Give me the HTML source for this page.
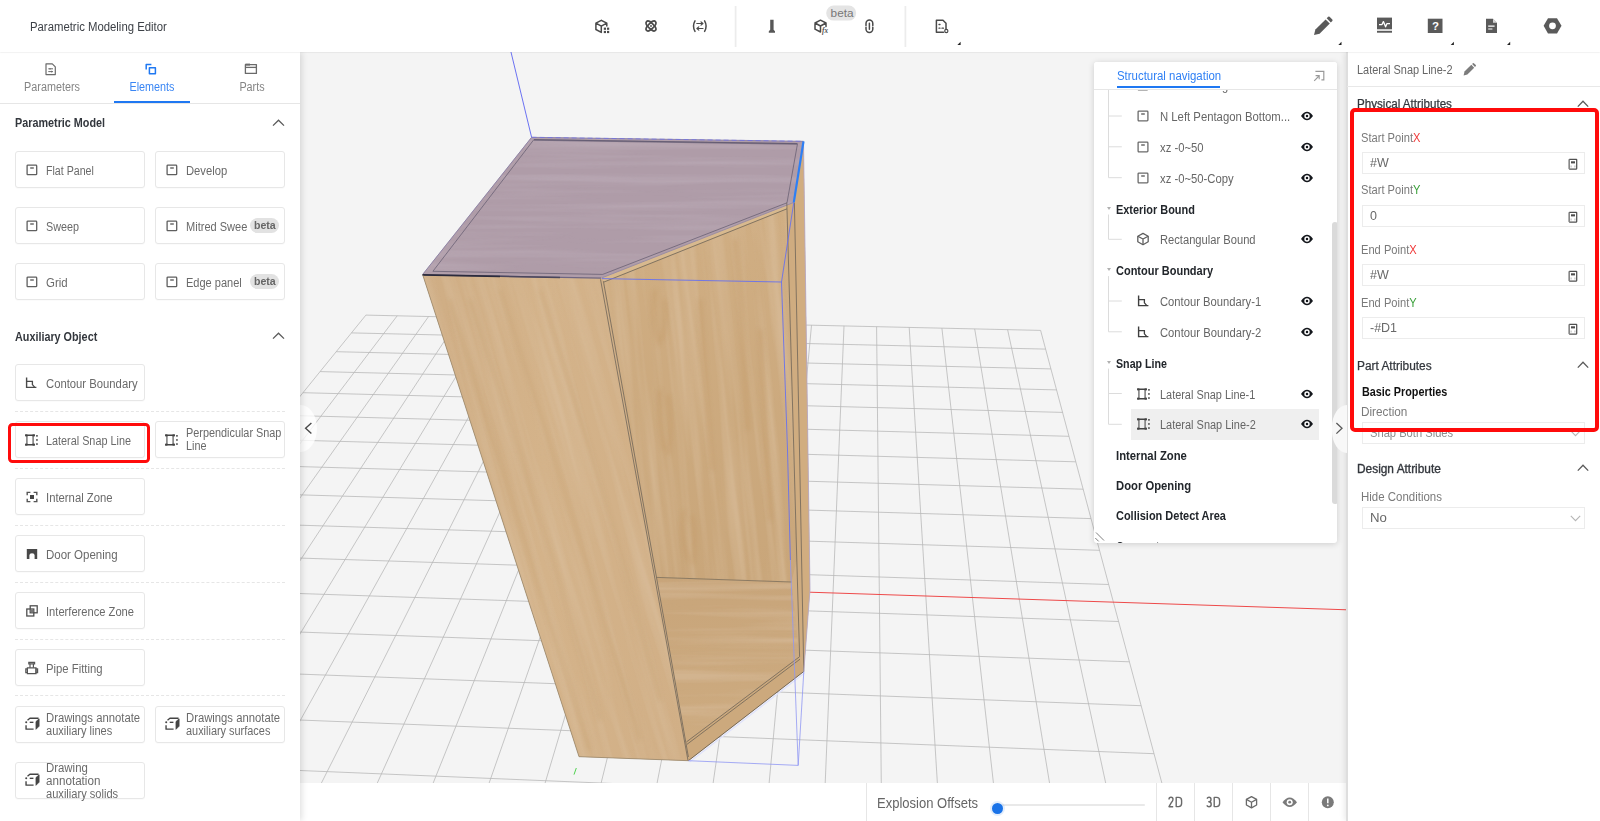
<!DOCTYPE html>
<html><head><meta charset="utf-8">
<style>
*{box-sizing:border-box;margin:0;padding:0}
html,body{width:1600px;height:821px;overflow:hidden;background:#fff;font-family:"Liberation Sans",sans-serif;font-size:12px;color:#60656f}
.abs{position:absolute}
#top{position:absolute;left:0;top:0;width:1600px;height:52px;background:#fff;box-shadow:0 0.5px 1.5px rgba(0,0,0,.13);z-index:30}
#top .title{position:absolute;left:29.6px;top:20px;font-size:12px;color:#3d4147;transform:scaleX(.945);transform-origin:0 50%;white-space:nowrap}
#left{position:absolute;left:0;top:52px;width:300px;height:769px;background:#fff;z-index:20;box-shadow:2px 0 6px rgba(0,0,0,.12)}
#vp{position:absolute;left:300px;top:52px;width:1047px;height:731px;background:#f4f4f4;overflow:hidden;z-index:1}
#bbar{position:absolute;left:300px;top:783px;width:1047px;height:38px;background:#fff;z-index:5}
#right{position:absolute;left:1347px;top:52px;width:253px;height:769px;background:#fff;z-index:20;box-shadow:-2px 0 6px rgba(0,0,0,.10)}
#nav{position:absolute;left:1094px;top:62px;width:243px;height:481px;background:#fff;z-index:10;box-shadow:0 1px 6px rgba(0,0,0,.16);overflow:hidden;border-radius:3px}
.ic{position:absolute}
</style></head><body>
<div id="top">
<div class="title">Parametric Modeling Editor</div>
<svg class="abs" style="left:0;top:0" width="1600" height="52" viewBox="0 0 1600 52">
<g fill="none" stroke="#4a4a4a" stroke-width="1.5" stroke-linejoin="round" stroke-linecap="round">
<!-- cube with dots -->
<path d="M601.3 20.3L606.8 23.2V26M601.3 20.3L595.9 23.2V29.5L601.3 32.4V26.2L595.9 23.2M601.3 26.2L606.8 23.2"/>
<!-- atom -->
<ellipse cx="651" cy="26" rx="6.3" ry="2.7" transform="rotate(45 651 26)" stroke-width="1.7"/>
<ellipse cx="651" cy="26" rx="6.3" ry="2.7" transform="rotate(-45 651 26)" stroke-width="1.7"/>
<!-- (swap) -->
<path d="M695 20.8Q692 26 695 31.4M704.6 20.8Q707.6 26 704.6 31.4"/>
<path d="M696.8 23.5H702.8M701 21.9L702.9 23.5L701 25.1M703 28.5H697M698.8 26.9L696.9 28.5L698.8 30.1" stroke-width="1.2"/>
<!-- cube fx -->
<path d="M820.5 20.2L826 23V26.4M820.5 20.2L815 23V29.2L820.5 32V26L815 23M820.5 26L826 23"/>
<!-- link -->
<path d="M866 25.4V23.5A3.4 3.4 0 0 1 872.8 23.5V25.4M866 27.2V29A3.4 3.4 0 0 0 872.8 29V27.2M869.4 23.2V29.3"/>
<!-- doc gear -->
<path d="M946 29V23.2L943 20.2H936.4V32.3H943.5"/>
<path d="M939 24.5H940M939 28.2H940M942 28.2H943.5" stroke-width="1.3"/>
<circle cx="946.3" cy="31" r="1.6" stroke-width="1.2"/>
</g>
<g fill="#4a4a4a">
<rect x="603.8" y="27.6" width="2.2" height="2.2"/><rect x="607" y="27.6" width="2.2" height="2.2"/>
<rect x="603.8" y="30.9" width="2.2" height="2.2"/><rect x="607" y="30.9" width="2.2" height="2.2"/>
<circle cx="651" cy="26" r="0.9"/>
<!-- pillar -->
<path d="M770.2 19.8H773.6V29.8L775 31.2V32.8H768.8V31.2L770.2 29.8Z" fill="#575757"/>
<text x="822" y="32.6" font-family="Liberation Serif,serif" font-style="italic" font-weight="bold" font-size="7.2" fill="#505050">fx</text>
</g>
<!-- separators -->
<path d="M735.6 6V47M905.4 6V47" stroke="#ececec" stroke-width="1.7"/>
<!-- beta badge -->
<rect x="826.2" y="5.6" width="30" height="15" rx="7.5" fill="#e4e4e4"/>
<text x="830.6" y="17.3" font-family="Liberation Sans,sans-serif" font-size="11.8" fill="#777">beta</text>
<!-- triangles -->
<g fill="#222">
<path d="M960.6 41.8V45H957.4Z"/><path d="M1341.5 41.8V45H1338.3Z"/><path d="M1453.9 41.8V45H1450.7Z"/><path d="M1510.2 41.8V45H1507Z"/>
</g>
<!-- right icons -->
<g fill="#5a5a5a">
<!-- pencil -->
<path d="M1314 35L1315.4 29.6L1325.6 19.4L1329.8 23.6L1319.6 33.8Z"/>
<path d="M1326.7 18.3L1328.2 16.8Q1328.9 16.2 1329.6 16.8L1332.3 19.5Q1332.9 20.2 1332.3 20.9L1330.8 22.4Z"/>
<!-- monitor -->
<path d="M1377 17.6H1392V29.3H1377Z"/>
<rect x="1377" y="30.8" width="15" height="1.9"/>
<!-- question -->
<rect x="1427.8" y="18.7" width="14.7" height="14.3"/>
<!-- doc -->
<path d="M1486 18.7H1493L1497 22.7V33H1486Z"/>
<!-- hex -->
<path d="M1543.6 25.8L1548 18.2H1557L1561.5 25.8L1557 33.5H1548Z"/>
</g>
<path d="M1379 24.6H1382L1383.4 21.6L1385.6 26.8L1387 23.6H1390" fill="none" stroke="#fff" stroke-width="1.3" stroke-linejoin="round"/>
<text x="1431.9" y="30.2" font-family="Liberation Sans,sans-serif" font-weight="bold" font-size="11.5" fill="#fff">?</text>
<path d="M1493 18.7V22.7H1497Z" fill="#fff" opacity="0.75"/>
<path d="M1488.2 26.2H1494.6M1488.2 29H1492.4" stroke="#fff" stroke-width="1.2"/>
<circle cx="1552.5" cy="25.8" r="3.4" fill="#fff"/>
</svg>
</div>
<style>
.t{display:inline-block;transform:scaleX(.9);transform-origin:0 50%;white-space:nowrap}
.btn{position:absolute;width:130px;height:37px;border:1px solid #e7e7e7;border-radius:3px;background:#fff;box-shadow:0 1px 1px rgba(0,0,0,.02)}
.btn .lb{position:absolute;left:29.9px;top:1.7px;height:35px;line-height:35px;color:#6a6a6a;font-size:12px}
.btn .lb2{position:absolute;left:29.9px;color:#6a6a6a;font-size:12px;line-height:13.2px}
.btn svg{position:absolute;left:8px;top:10px}
.sec{position:absolute;left:15px;font-weight:bold;color:#33373d;font-size:12px}
.dash{position:absolute;left:15px;width:270px;height:0;border-top:1px dashed #e6e6e6}
.beta{position:absolute;height:14.5px;width:29px;border-radius:7.5px;background:#e2e2e2;color:#666;font-weight:bold;font-size:11.5px;line-height:14px;padding-left:3.5px}
.tab{position:absolute;top:0;width:100px;height:51px;text-align:center;color:#858585;font-size:12px}
.tab .tl{position:absolute;left:1.6px;width:100px;top:28px;text-align:center}
.tab .tl .t{transform-origin:50% 50%}
</style>
<div id="left">
<div class="tab" style="left:0"><svg class="abs" style="left:44px;top:10px" width="14" height="14" viewBox="0 0 14 14" fill="none" stroke="#6a6a6a" stroke-width="1.2" stroke-linejoin="round"><path d="M2 1.8H8.3L11.3 4.8V12.6H2Z"/><path d="M4.3 6.8H9M4.3 9.6H9" stroke-width="1"/><path d="M6 6V7.6M7.6 8.8V10.4" stroke-width="1"/></svg><div class="tl"><span class="t">Parameters</span></div></div>
<div class="tab" style="left:100px;color:#3a86f4"><svg class="abs" style="left:44px;top:10px" width="14" height="14" viewBox="0 0 14 14" fill="none" stroke="#1f78f2" stroke-width="1.5" stroke-linejoin="round"><path d="M2.2 7.5V2.6H7.4"/><rect x="5.4" y="5.8" width="6" height="6"/></svg><div class="tl"><span class="t">Elements</span></div></div>
<div class="tab" style="left:200px"><svg class="abs" style="left:44px;top:10px" width="14" height="14" viewBox="0 0 14 14" fill="none" stroke="#6a6a6a" stroke-width="1.3" stroke-linejoin="round"><path d="M1.4 2.6H12.4V11.4H1.4Z"/><path d="M1.4 5.4H12.4"/><path d="M1.4 2.6H6" stroke-width="2"/></svg><div class="tl"><span class="t">Parts</span></div></div>
<div class="abs" style="left:0;top:51px;width:300px;height:1px;background:#e6e6e6"></div>
<div class="abs" style="left:114px;top:49px;width:76px;height:2px;background:#1f78f2"></div>
<div class="sec" style="top:64px"><span class="t" style="transform:scaleX(.9)">Parametric Model</span></div><svg class="abs" style="left:272px;top:67px" width="13" height="8" viewBox="0 0 13 8" fill="none" stroke="#5a5a5a" stroke-width="1.3"><path d="M1 6.6L6.5 1.2L12 6.6"/></svg>
<div class="sec" style="top:278px"><span class="t" style="transform:scaleX(.9)">Auxiliary Object</span></div><svg class="abs" style="left:272px;top:280px" width="13" height="8" viewBox="0 0 13 8" fill="none" stroke="#5a5a5a" stroke-width="1.3"><path d="M1 6.6L6.5 1.2L12 6.6"/></svg>
<div class="btn" style="left:15px;top:99px"><svg style="left:8.7px;top:10.5px" width="14" height="14" viewBox="0 0 14 14" fill="none" stroke="#5f5f5f" stroke-width="1.3"><rect x="2.1" y="2.1" width="9.6" height="9.6" rx="0.8"/><path d="M5.2 5H8.8" stroke-width="1.4"/></svg><div class="lb"><span class="t" style="transform:scaleX(0.885)">Flat Panel</span></div></div>
<div class="btn" style="left:155px;top:99px"><svg style="left:8.7px;top:10.5px" width="14" height="14" viewBox="0 0 14 14" fill="none" stroke="#5f5f5f" stroke-width="1.3"><rect x="2.1" y="2.1" width="9.6" height="9.6" rx="0.8"/><path d="M5.2 5H8.8" stroke-width="1.4"/></svg><div class="lb"><span class="t" style="transform:scaleX(0.936)">Develop</span></div></div>
<div class="btn" style="left:15px;top:155px"><svg style="left:8.7px;top:10.5px" width="14" height="14" viewBox="0 0 14 14" fill="none" stroke="#5f5f5f" stroke-width="1.3"><rect x="2.1" y="2.1" width="9.6" height="9.6" rx="0.8"/><path d="M5.2 5H8.8" stroke-width="1.4"/></svg><div class="lb"><span class="t" style="transform:scaleX(0.898)">Sweep</span></div></div>
<div class="btn" style="left:155px;top:155px"><svg style="left:8.7px;top:10.5px" width="14" height="14" viewBox="0 0 14 14" fill="none" stroke="#5f5f5f" stroke-width="1.3"><rect x="2.1" y="2.1" width="9.6" height="9.6" rx="0.8"/><path d="M5.2 5H8.8" stroke-width="1.4"/></svg><div class="lb"><span class="t" style="transform:scaleX(0.92)">Mitred Swee</span></div><div class="beta" style="left:94px;top:10px"><span class="t" style="transform:scaleX(.92)">beta</span></div></div>
<div class="btn" style="left:15px;top:211px"><svg style="left:8.7px;top:10.5px" width="14" height="14" viewBox="0 0 14 14" fill="none" stroke="#5f5f5f" stroke-width="1.3"><rect x="2.1" y="2.1" width="9.6" height="9.6" rx="0.8"/><path d="M5.2 5H8.8" stroke-width="1.4"/></svg><div class="lb"><span class="t" style="transform:scaleX(0.953)">Grid</span></div></div>
<div class="btn" style="left:155px;top:211px"><svg style="left:8.7px;top:10.5px" width="14" height="14" viewBox="0 0 14 14" fill="none" stroke="#5f5f5f" stroke-width="1.3"><rect x="2.1" y="2.1" width="9.6" height="9.6" rx="0.8"/><path d="M5.2 5H8.8" stroke-width="1.4"/></svg><div class="lb"><span class="t" style="transform:scaleX(0.919)">Edge panel</span></div><div class="beta" style="left:94px;top:10px"><span class="t" style="transform:scaleX(.92)">beta</span></div></div>
<div class="btn" style="left:15px;top:312px"><svg style="left:7.7px;top:10.5px" width="14" height="14" viewBox="0 0 14 14" fill="none" stroke="#4a4a4a" stroke-width="1.4"><path d="M2.6 1.4V11.4H12.4"/><path d="M2.6 5.4H8.4V8.6L10.6 11.2" stroke-width="1.3"/></svg><div class="lb"><span class="t" style="transform:scaleX(0.94)">Contour Boundary</span></div></div>
<div class="btn" style="left:15px;top:369px"><svg style="left:7.2px;top:10.5px" width="16" height="14" viewBox="0 0 16 14" fill="none"><path d="M3.9 2V12M10.1 2V12" stroke="#7a7a7a" stroke-width="1.5"/><path d="M2.2 2.3H11.8M2.2 11.7H11.8" stroke="#444" stroke-width="1.4"/><g fill="#444"><rect x="2.2" y="1.4" width="2.2" height="2"/><rect x="9.6" y="1.4" width="2.2" height="2"/><rect x="2.2" y="10.6" width="2.2" height="2"/><rect x="9.6" y="10.6" width="2.2" height="2"/><rect x="13.2" y="2" width="1.5" height="1.7"/><rect x="13.2" y="6.1" width="1.5" height="1.7"/><rect x="13.2" y="10.2" width="1.5" height="1.7"/></g></svg><div class="lb"><span class="t" style="transform:scaleX(0.903)">Lateral Snap Line</span></div></div>
<div class="btn" style="left:155px;top:369px"><svg style="left:7.2px;top:10.5px" width="16" height="14" viewBox="0 0 16 14" fill="none"><path d="M3.9 2V12M10.1 2V12" stroke="#7a7a7a" stroke-width="1.5"/><path d="M2.2 2.3H11.8M2.2 11.7H11.8" stroke="#444" stroke-width="1.4"/><g fill="#444"><rect x="2.2" y="1.4" width="2.2" height="2"/><rect x="9.6" y="1.4" width="2.2" height="2"/><rect x="2.2" y="10.6" width="2.2" height="2"/><rect x="9.6" y="10.6" width="2.2" height="2"/><rect x="13.2" y="2" width="1.5" height="1.7"/><rect x="13.2" y="6.1" width="1.5" height="1.7"/><rect x="13.2" y="10.2" width="1.5" height="1.7"/></g></svg><div class="lb2" style="top:4.6px;line-height:13.2px"><span class="t" style="display:block;transform:scaleX(0.905)">Perpendicular Snap</span><span class="t" style="display:block;transform:scaleX(0.904)">Line</span></div></div>
<div class="btn" style="left:15px;top:426px"><svg style="left:8.7px;top:10.5px" width="14" height="14" viewBox="0 0 14 14" fill="none" stroke="#555" stroke-width="1.4"><path d="M2.2 5.2V2.4H5.4M8.6 2.4H11.8V5.2M11.8 8.8V11.6H8.6M5.4 11.6H2.2V8.8"/><rect x="5" y="5" width="4" height="4" fill="#444" stroke="none"/></svg><div class="lb"><span class="t" style="transform:scaleX(0.942)">Internal Zone</span></div></div>
<div class="btn" style="left:15px;top:483px"><svg style="left:8.7px;top:10.5px" width="14" height="14" viewBox="0 0 14 14"><path d="M1.8 1.9H12.2V12.1H9.6V8.2Q9.6 6.3 7 6.3Q4.4 6.3 4.4 8.2V12.1H1.8Z" fill="#484848"/></svg><div class="lb"><span class="t" style="transform:scaleX(0.958)">Door Opening</span></div></div>
<div class="btn" style="left:15px;top:540px"><svg style="left:8.7px;top:10.5px" width="14" height="14" viewBox="0 0 14 14" fill="none" stroke="#4f4f4f" stroke-width="1.3"><rect x="5.2" y="1.8" width="7" height="7"/><rect x="1.8" y="5" width="7" height="7" /><rect x="5.6" y="5.4" width="2.6" height="2.8" fill="#777" stroke="none"/></svg><div class="lb"><span class="t" style="transform:scaleX(0.929)">Interference Zone</span></div></div>
<div class="btn" style="left:15px;top:597px"><svg style="left:8.2px;top:10.5px" width="16" height="14" viewBox="0 0 16 14" fill="none" stroke="#555" stroke-width="1.2"><path d="M4.8 1.4H10.6V2.8H4.8Z"/><path d="M6 2.8V6.8M9.4 2.8V6.8"/><path d="M3.4 6.8H12V12.6H3.4Z"/><path d="M1.8 7.8H3.4V11.6H1.8ZM12 7.8H13.6V11.6H12Z"/></svg><div class="lb"><span class="t" style="transform:scaleX(0.941)">Pipe Fitting</span></div></div>
<div class="btn" style="left:15px;top:654px"><svg style="left:8.3px;top:10px" width="16.6" height="13.8" viewBox="0 0 18 15" fill="none" stroke="#444" stroke-width="1.5" stroke-linejoin="round"><path d="M13 5L16.4 2V10L13 13.4Z" fill="#444" stroke-width="0.8"/><path d="M3.8 3.6L6.4 1.4H15.8"/><path d="M2.2 9V13.2H10.4"/><path d="M6.2 5.8H10.2"/><circle cx="2.4" cy="5.6" r="1.1" fill="#444" stroke="none"/></svg><div class="lb2" style="top:4.6px;line-height:13.2px"><span class="t" style="display:block;transform:scaleX(0.94)">Drawings annotate</span><span class="t" style="display:block;transform:scaleX(0.92)">auxiliary lines</span></div></div>
<div class="btn" style="left:155px;top:654px"><svg style="left:8.3px;top:10px" width="16.6" height="13.8" viewBox="0 0 18 15" fill="none" stroke="#444" stroke-width="1.5" stroke-linejoin="round"><path d="M13 5L16.4 2V10L13 13.4Z" fill="#444" stroke-width="0.8"/><path d="M3.8 3.6L6.4 1.4H15.8"/><path d="M2.2 9V13.2H10.4"/><path d="M6.2 5.8H10.2"/><circle cx="2.4" cy="5.6" r="1.1" fill="#444" stroke="none"/></svg><div class="lb2" style="top:4.6px;line-height:13.2px"><span class="t" style="display:block;transform:scaleX(0.94)">Drawings annotate</span><span class="t" style="display:block;transform:scaleX(0.91)">auxiliary surfaces</span></div></div>
<div class="btn" style="left:15px;top:710px"><svg style="left:8.3px;top:10px" width="16.6" height="13.8" viewBox="0 0 18 15" fill="none" stroke="#444" stroke-width="1.5" stroke-linejoin="round"><path d="M13 5L16.4 2V10L13 13.4Z" fill="#444" stroke-width="0.8"/><path d="M3.8 3.6L6.4 1.4H15.8"/><path d="M2.2 9V13.2H10.4"/><path d="M6.2 5.8H10.2"/><circle cx="2.4" cy="5.6" r="1.1" fill="#444" stroke="none"/></svg><div class="lb2" style="top:-0.8px;line-height:12.85px"><span class="t" style="display:block;transform:scaleX(0.95)">Drawing</span><span class="t" style="display:block;transform:scaleX(0.97)">annotation</span><span class="t" style="display:block;transform:scaleX(0.924)">auxiliary solids</span></div></div>
<div class="dash" style="top:359px"></div>
<div class="dash" style="top:416px"></div>
<div class="dash" style="top:473px"></div>
<div class="dash" style="top:530px"></div>
<div class="dash" style="top:587px"></div>
<div class="dash" style="top:643px"></div>
<div class="abs" style="left:8px;top:370.8px;width:141.8px;height:39.8px;border:3.5px solid #ff0b0b;border-radius:4.5px"></div>
</div>
<div id="vp"><svg width="1047" height="731" viewBox="300 52 1047 731" style="position:absolute;left:0;top:0">
<defs>
<filter id="grainV" x="0" y="0" width="100%" height="100%"><feTurbulence type="fractalNoise" baseFrequency="0.09 0.004" numOctaves="3" seed="7" result="n"/><feColorMatrix in="n" type="matrix" values="0 0 0 0 0.70  0 0 0 0 0.52  0 0 0 0 0.34  2.2 0 0 0 -0.85"/></filter>
<filter id="grainH" x="0" y="0" width="100%" height="100%"><feTurbulence type="fractalNoise" baseFrequency="0.004 0.11" numOctaves="3" seed="3" result="n"/><feColorMatrix in="n" type="matrix" values="0 0 0 0 0.68  0 0 0 0 0.50  0 0 0 0 0.33  2.2 0 0 0 -0.85"/></filter>
<filter id="grainP" x="0" y="0" width="100%" height="100%"><feTurbulence type="fractalNoise" baseFrequency="0.004 0.12" numOctaves="3" seed="11" result="n"/><feColorMatrix in="n" type="matrix" values="0 0 0 0 0.58  0 0 0 0 0.50  0 0 0 0 0.57  2.0 0 0 0 -0.8"/></filter>
<filter id="blur3" x="-50%" y="-50%" width="200%" height="200%"><feGaussianBlur stdDeviation="2.2"/></filter>
<clipPath id="cLeft"><polygon points="422.6,274.5 601.8,277.9 688.4,760.7 579,756.7"/></clipPath>
<clipPath id="cBack"><polygon points="604,282 787,208.8 796.8,560 791.5,582 656.7,577.4"/></clipPath>
<clipPath id="cBot"><polygon points="656.7,577.4 791.5,582 799.6,656.7 686.5,741.9"/></clipPath>
<clipPath id="cTop"><polygon points="531.6,137.3 803.5,141.3 793.8,202.4 601.8,277.9 422.6,274.5"/></clipPath>
<linearGradient id="gLeft" x1="0" y1="0" x2="1" y2="0"><stop offset="0" stop-color="#cfad84"/><stop offset="0.45" stop-color="#d4b38a"/><stop offset="1" stop-color="#d1af86"/></linearGradient>
<linearGradient id="gBack" x1="0" y1="0" x2="0" y2="1"><stop offset="0" stop-color="#d0ae83"/><stop offset="1" stop-color="#c9a67a"/></linearGradient>
<linearGradient id="gBot" x1="0" y1="0" x2="0" y2="1"><stop offset="0" stop-color="#c8a57a"/><stop offset="1" stop-color="#cdab80"/></linearGradient>
</defs>
<path d="M365.9 315.1L-262.8 1090.2M397.2 315.8L-194.2 1094.1M428.5 316.6L-125.2 1098.0M460.0 317.3L-55.8 1101.8M491.5 318.0L14.0 1105.8M523.2 318.7L84.2 1109.7M554.9 319.4L154.9 1113.7M586.7 320.1L225.9 1117.7M618.5 320.8L297.4 1121.7M650.5 321.6L369.3 1125.7M682.5 322.3L441.7 1129.8M714.7 323.0L514.5 1133.9M746.9 323.7L587.7 1138.0M779.2 324.5L661.4 1142.1M811.5 325.2L735.5 1146.3M844.0 325.9L810.1 1150.5M876.6 326.7L885.1 1154.7M909.2 327.4L960.6 1158.9M941.9 328.1L1036.5 1163.2M974.7 328.9L1112.9 1167.5M1007.6 329.6L1189.8 1171.8M1040.6 330.4L1267.2 1176.1M365.9 315.1L1040.6 330.4M351.5 332.9L1045.6 349.1M336.2 351.7L1050.9 368.9M320.1 371.6L1056.6 389.9M302.9 392.7L1062.6 412.4M284.6 415.3L1069.0 436.3M265.1 439.3L1075.8 461.8M244.3 465.0L1083.2 489.2M222.0 492.5L1091.0 518.6M198.0 522.0L1099.5 550.3M172.2 553.9L1108.7 584.5M144.4 588.2L1118.6 621.5M114.2 625.4L1129.4 661.8M81.4 665.9L1141.1 705.7M45.6 710.0L1154.0 753.7M6.4 758.3L1168.2 806.6M-36.7 811.4L1183.8 865.0M-84.3 870.2L1201.2 929.8M-137.2 935.4L1220.6 1002.3M-196.4 1008.3L1242.4 1083.8M-262.8 1090.2L1267.2 1176.1" fill="none" stroke="#b9b9b9" stroke-width="0.8"/>
<path d="M809.4 592.2L1347 609.8" stroke="#ee4a4a" stroke-width="1" fill="none"/>
<path d="M574 774.6L576.3 768" stroke="#4fd34f" stroke-width="1" fill="none"/>
<path d="M510.5 50L531.6 137.3" stroke="#5b63f2" stroke-width="0.9" fill="none"/>
<polygon points="422.6,274.5 531.6,137.3 803.5,141.3 810,590 803.8,671.5 688.4,760.7 579,756.7" fill="#d0ae84"/>
<polygon points="422.6,274.5 601.8,277.9 688.4,760.7 579,756.7" fill="url(#gLeft)"/>
<g clip-path="url(#cLeft)"><rect x="-60" y="-20" width="360" height="520" filter="url(#grainV)" transform="translate(440,270) skewX(16)" opacity="0.6"/></g>
<polygon points="604,282 787,208.8 796.8,560 791.5,582 656.7,577.4" fill="url(#gBack)"/>
<g clip-path="url(#cBack)"><rect x="0" y="0" width="260" height="420" filter="url(#grainV)" transform="translate(585,190) skewX(6)" opacity="0.6"/></g>
<g clip-path="url(#cBack)" filter="url(#blur3)" fill="none" stroke="#c39a68" stroke-width="3" opacity="0.55"><path d="M655 290Q650 320 660 345M664 300Q668 320 662 340M660 390Q656 420 664 450M668 395Q673 425 668 455M684 510Q680 535 688 560M692 515Q697 540 692 565M700 300Q705 380 712 470M735 240Q742 330 748 430M760 330Q764 420 770 520"/></g>
<g clip-path="url(#cLeft)" filter="url(#blur3)" fill="none" stroke="#c6a070" stroke-width="3" opacity="0.4"><path d="M470 300Q520 450 600 720M500 290Q560 470 640 740M540 290Q590 440 660 700M450 300Q500 460 590 750"/></g>
<polygon points="656.7,577.4 791.5,582 799.6,656.7 686.5,741.9" fill="url(#gBot)"/>
<g clip-path="url(#cBot)"><rect x="640" y="570" width="180" height="180" filter="url(#grainH)" opacity="0.6"/></g>
<polygon points="686.5,741.9 799.6,656.7 803.8,671.5 688.4,760.7" fill="#cca97d"/>
<polygon points="601.8,277.9 793.8,202.4 794.4,203 787,208.8 604,282" fill="#d8b98e"/>
<polygon points="787,203 794.4,203 799.5,450 801.6,560 803.8,671.5 799.6,656.7 796.8,560 793.8,450" fill="#cfac80"/>
<polygon points="794.4,203 803.5,141.3 810,590 803.8,671.5 801.6,560 799.5,450" fill="#d1ad80"/>
<polygon points="531.6,137.3 803.5,141.3 793.8,202.4 601.8,277.9 422.6,274.5" fill="#af9ca8"/>
<g clip-path="url(#cTop)"><rect x="420" y="135" width="390" height="150" filter="url(#grainP)" opacity="0.36"/></g>
<path d="M533.8 139.7L797.5 143.7L787 202.8L602.7 274.4L432.9 271.3Z" fill="none" stroke="#5d566b" stroke-width="0.8" opacity="0.85"/>
<path d="M534 139.9L797 143.9" fill="none" stroke="#55506a" stroke-width="1.6" opacity="0.55"/>
<path d="M422.6 274.5L531.6 137.3L803.5 141.3" fill="none" stroke="#8a80a8" stroke-width="0.9"/>
<path d="M531.6 137.3L803.5 141.3" fill="none" stroke="#6a6cf0" stroke-width="0.8" stroke-dasharray="5 3" opacity="0.8"/>
<path d="M422.6 274.8L601 278.2" fill="none" stroke="#6f6682" stroke-width="1.2"/><path d="M422.6 274.8L500 276.3" fill="none" stroke="#2b2b3c" stroke-width="1.8"/><path d="M500 276.3L560 277.4" fill="none" stroke="#4a465c" stroke-width="1.5"/>
<path d="M604 282L787 208.8" fill="none" stroke="#6b6256" stroke-width="0.8"/>
<path d="M601.8 277.9L793.8 202.4" fill="none" stroke="#8d84a6" stroke-width="0.7"/>
<path d="M600.5 279.3L688 760.5M603.4 281.2L669.5 650L688.4 757" fill="none" stroke="#6f6558" stroke-width="0.8"/>
<path d="M422.6 274.5L579 756.7" fill="none" stroke="#8f7f66" stroke-width="0.7"/>
<path d="M579 756.7L688.4 760.7" fill="none" stroke="#8f7f66" stroke-width="0.7"/>
<path d="M656.7 577.4L791.5 582" fill="none" stroke="#7b6e5c" stroke-width="0.8"/>
<path d="M686.5 741.9L799.6 656.7M686.9 744.4L800 659.2" fill="none" stroke="#6f6558" stroke-width="0.8"/>
<path d="M688.4 760.7L803.8 671.5" fill="none" stroke="#5a5248" stroke-width="0.8"/>
<path d="M689.5 762L804.5 673" fill="none" stroke="#dfe2fb" stroke-width="1.4"/>
<path d="M786.8 202.7L793.8 450L796.8 560L799.6 656.7M794.4 202.7L799.5 450L801.6 560L803.8 671.5" fill="none" stroke="#6f6558" stroke-width="0.8"/>
<path d="M803.5 141.3L810 590L803.8 671.5" fill="none" stroke="#b3a6c9" stroke-width="0.8"/>
<path d="M803.5 141.3L793.8 202.4" fill="none" stroke="#2d7ff5" stroke-width="2.2"/>
<path d="M793.8 202.4L781.5 282L601.8 278.6M781.5 282L787.5 450L790.4 560" fill="none" stroke="#6670ee" stroke-width="0.9"/>
<path d="M790.4 560L798.2 765.4L688.4 760.7M803.8 671.5L798.2 765.4" fill="none" stroke="#8f97f4" stroke-width="0.8"/>
</svg>
<!--VPEXTRA--></div>
<style>
#nav .row{position:absolute;left:0;width:243px;height:30px}
#nav .it{position:absolute;left:65.7px;top:1px;line-height:30px;font-size:12px;color:#666}
#nav .gp{position:absolute;left:22.1px;top:1px;line-height:30px;font-size:12px;color:#22262b;font-weight:bold}
#nav .gp .t{transform:scaleX(.905)}
#nav .it .t{transform:scaleX(.93)}
#nav .ico{position:absolute;left:42px;top:8px}
#nav .eye{position:absolute;left:206px;top:10px}
#nav .car{position:absolute;left:12.5px;top:13px;width:0;height:0;border-left:2.3px solid transparent;border-right:2.3px solid transparent;border-top:3.4px solid #b0b0b0}
</style>
<div id="nav">
<div class="abs" style="left:37px;top:347.3px;width:188px;height:30.5px;background:#efefef"></div>
<svg class="abs" style="left:0;top:0" width="243" height="481"><path d="M14.5 18.0V115.7M14.5 54.0H27.799999999999955M14.5 84.8H27.799999999999955M14.5 115.7H27.799999999999955M14.5 152.5V177.3M14.5 177.3H27.799999999999955M14.5 214.1V269.8M14.5 239.0H27.799999999999955M14.5 269.8H27.799999999999955M14.5 306.6V362.3M14.5 331.5H27.799999999999955M14.5 362.3H27.799999999999955" fill="none" stroke="#dcdcdc" stroke-width="1"/></svg>
<div class="row" style="top:8.2px"><svg class="ico" width="14" height="14" viewBox="0 0 14 14" fill="none" stroke="#6a6a6a" stroke-width="1.3"><rect x="2.1" y="2.1" width="9.8" height="9.8" rx="0.8"/><path d="M5.2 5H8.8" stroke-width="1.4"/></svg><div class="it"><span class="t" style="transform:scaleX(0.930)">N Left Pentagon Botto</span></div><svg class="eye" width="14" height="10" viewBox="0 0 14 10"><path d="M1 5Q4 0.8 7 0.8Q10 0.8 13 5Q10 9.2 7 9.2Q4 9.2 1 5Z" fill="#14171c"/><circle cx="7" cy="5" r="2.7" fill="#fff"/><circle cx="7" cy="5" r="1.25" fill="#14171c"/></svg></div>
<div class="row" style="top:39.0px"><svg class="ico" width="14" height="14" viewBox="0 0 14 14" fill="none" stroke="#6a6a6a" stroke-width="1.3"><rect x="2.1" y="2.1" width="9.8" height="9.8" rx="0.8"/><path d="M5.2 5H8.8" stroke-width="1.4"/></svg><div class="it"><span class="t" style="transform:scaleX(0.943)">N Left Pentagon Bottom...</span></div><svg class="eye" width="14" height="10" viewBox="0 0 14 10"><path d="M1 5Q4 0.8 7 0.8Q10 0.8 13 5Q10 9.2 7 9.2Q4 9.2 1 5Z" fill="#14171c"/><circle cx="7" cy="5" r="2.7" fill="#fff"/><circle cx="7" cy="5" r="1.25" fill="#14171c"/></svg></div>
<div class="row" style="top:69.8px"><svg class="ico" width="14" height="14" viewBox="0 0 14 14" fill="none" stroke="#6a6a6a" stroke-width="1.3"><rect x="2.1" y="2.1" width="9.8" height="9.8" rx="0.8"/><path d="M5.2 5H8.8" stroke-width="1.4"/></svg><div class="it"><span class="t" style="transform:scaleX(0.939)">xz -0~50</span></div><svg class="eye" width="14" height="10" viewBox="0 0 14 10"><path d="M1 5Q4 0.8 7 0.8Q10 0.8 13 5Q10 9.2 7 9.2Q4 9.2 1 5Z" fill="#14171c"/><circle cx="7" cy="5" r="2.7" fill="#fff"/><circle cx="7" cy="5" r="1.25" fill="#14171c"/></svg></div>
<div class="row" style="top:100.7px"><svg class="ico" width="14" height="14" viewBox="0 0 14 14" fill="none" stroke="#6a6a6a" stroke-width="1.3"><rect x="2.1" y="2.1" width="9.8" height="9.8" rx="0.8"/><path d="M5.2 5H8.8" stroke-width="1.4"/></svg><div class="it"><span class="t" style="transform:scaleX(0.939)">xz -0~50-Copy</span></div><svg class="eye" width="14" height="10" viewBox="0 0 14 10"><path d="M1 5Q4 0.8 7 0.8Q10 0.8 13 5Q10 9.2 7 9.2Q4 9.2 1 5Z" fill="#14171c"/><circle cx="7" cy="5" r="2.7" fill="#fff"/><circle cx="7" cy="5" r="1.25" fill="#14171c"/></svg></div>
<div class="row" style="top:131.5px"><div class="car"></div><div class="gp"><span class="t" style="transform:scaleX(0.910)">Exterior Bound</span></div></div>
<div class="row" style="top:162.3px"><svg class="ico" width="14" height="14" viewBox="0 0 14 14" fill="none" stroke="#5f5f5f" stroke-width="1.3" stroke-linejoin="round"><path d="M7 1.4L12.2 4.2V9.8L7 12.7L1.8 9.8V4.2Z"/><path d="M1.8 4.2L7 7L12.2 4.2M7 7V12.7"/></svg><div class="it"><span class="t" style="transform:scaleX(0.930)">Rectangular Bound</span></div><svg class="eye" width="14" height="10" viewBox="0 0 14 10"><path d="M1 5Q4 0.8 7 0.8Q10 0.8 13 5Q10 9.2 7 9.2Q4 9.2 1 5Z" fill="#14171c"/><circle cx="7" cy="5" r="2.7" fill="#fff"/><circle cx="7" cy="5" r="1.25" fill="#14171c"/></svg></div>
<div class="row" style="top:193.1px"><div class="car"></div><div class="gp"><span class="t" style="transform:scaleX(0.916)">Contour Boundary</span></div></div>
<div class="row" style="top:224.0px"><svg class="ico" width="14" height="14" viewBox="0 0 14 14" fill="none" stroke="#3f3f3f" stroke-width="1.4"><path d="M2.6 1.4V11.6H12.4"/><path d="M2.6 5.6H8.4V8.8L10.6 11.4" stroke-width="1.3"/></svg><div class="it"><span class="t" style="transform:scaleX(0.936)">Contour Boundary-1</span></div><svg class="eye" width="14" height="10" viewBox="0 0 14 10"><path d="M1 5Q4 0.8 7 0.8Q10 0.8 13 5Q10 9.2 7 9.2Q4 9.2 1 5Z" fill="#14171c"/><circle cx="7" cy="5" r="2.7" fill="#fff"/><circle cx="7" cy="5" r="1.25" fill="#14171c"/></svg></div>
<div class="row" style="top:254.8px"><svg class="ico" width="14" height="14" viewBox="0 0 14 14" fill="none" stroke="#3f3f3f" stroke-width="1.4"><path d="M2.6 1.4V11.6H12.4"/><path d="M2.6 5.6H8.4V8.8L10.6 11.4" stroke-width="1.3"/></svg><div class="it"><span class="t" style="transform:scaleX(0.937)">Contour Boundary-2</span></div><svg class="eye" width="14" height="10" viewBox="0 0 14 10"><path d="M1 5Q4 0.8 7 0.8Q10 0.8 13 5Q10 9.2 7 9.2Q4 9.2 1 5Z" fill="#14171c"/><circle cx="7" cy="5" r="2.7" fill="#fff"/><circle cx="7" cy="5" r="1.25" fill="#14171c"/></svg></div>
<div class="row" style="top:285.6px"><div class="car"></div><div class="gp"><span class="t" style="transform:scaleX(0.890)">Snap Line</span></div></div>
<div class="row" style="top:316.5px"><svg class="ico" style="left:41px" width="16" height="14" viewBox="0 0 16 14" fill="none"><path d="M3.9 2V12M10.1 2V12" stroke="#7a7a7a" stroke-width="1.5"/><path d="M2.2 2.3H11.8M2.2 11.7H11.8" stroke="#444" stroke-width="1.4"/><g fill="#444"><rect x="2.2" y="1.4" width="2.2" height="2"/><rect x="9.6" y="1.4" width="2.2" height="2"/><rect x="2.2" y="10.6" width="2.2" height="2"/><rect x="9.6" y="10.6" width="2.2" height="2"/><rect x="13.2" y="2" width="1.5" height="1.7"/><rect x="13.2" y="6.1" width="1.5" height="1.7"/><rect x="13.2" y="10.2" width="1.5" height="1.7"/></g></svg><div class="it"><span class="t" style="transform:scaleX(0.909)">Lateral Snap Line-1</span></div><svg class="eye" width="14" height="10" viewBox="0 0 14 10"><path d="M1 5Q4 0.8 7 0.8Q10 0.8 13 5Q10 9.2 7 9.2Q4 9.2 1 5Z" fill="#14171c"/><circle cx="7" cy="5" r="2.7" fill="#fff"/><circle cx="7" cy="5" r="1.25" fill="#14171c"/></svg></div>
<div class="row" style="top:347.3px"><svg class="ico" style="left:41px" width="16" height="14" viewBox="0 0 16 14" fill="none"><path d="M3.9 2V12M10.1 2V12" stroke="#7a7a7a" stroke-width="1.5"/><path d="M2.2 2.3H11.8M2.2 11.7H11.8" stroke="#444" stroke-width="1.4"/><g fill="#444"><rect x="2.2" y="1.4" width="2.2" height="2"/><rect x="9.6" y="1.4" width="2.2" height="2"/><rect x="2.2" y="10.6" width="2.2" height="2"/><rect x="9.6" y="10.6" width="2.2" height="2"/><rect x="13.2" y="2" width="1.5" height="1.7"/><rect x="13.2" y="6.1" width="1.5" height="1.7"/><rect x="13.2" y="10.2" width="1.5" height="1.7"/></g></svg><div class="it"><span class="t" style="transform:scaleX(0.914)">Lateral Snap Line-2</span></div><svg class="eye" width="14" height="10" viewBox="0 0 14 10"><path d="M1 5Q4 0.8 7 0.8Q10 0.8 13 5Q10 9.2 7 9.2Q4 9.2 1 5Z" fill="#14171c"/><circle cx="7" cy="5" r="2.7" fill="#fff"/><circle cx="7" cy="5" r="1.25" fill="#14171c"/></svg></div>
<div class="row" style="top:378.0px"><div class="gp"><span class="t" style="transform:scaleX(0.941)">Internal Zone</span></div></div>
<div class="row" style="top:408.4px"><div class="gp"><span class="t" style="transform:scaleX(0.938)">Door Opening</span></div></div>
<div class="row" style="top:437.9px"><div class="gp"><span class="t" style="transform:scaleX(0.914)">Collision Detect Area</span></div></div>
<div class="row" style="top:469.3px"><div class="gp"><span class="t" style="transform:scaleX(0.905)">Connector</span></div></div>
<div class="abs" style="left:0;top:0;width:243px;height:27.8px;background:#fff;border-bottom:1px solid #e6e6e6"></div>
<div class="abs" style="left:23.2px;top:7px;font-size:12px;color:#2f80f5;line-height:14px"><span class="t" style="transform:scaleX(.952)">Structural navigation</span></div>
<div class="abs" style="left:23.2px;top:24.3px;width:102.6px;height:2px;background:#1f78f2"></div>
<svg class="abs" style="left:219px;top:7.5px" width="12" height="12" viewBox="0 0 12 12" fill="none" stroke="#9a9a9a" stroke-width="1.2"><path d="M2.4 1.4H10.8V9.8H8.4"/><path d="M1.2 10.8L6 6M2.6 5.6H6.2V9.2" stroke-width="1.1"/></svg>
<div class="abs" style="left:237.5px;top:159.8px;width:6px;height:282px;border-radius:3px;background:#dadada"></div>
<svg class="abs" style="left:0;top:469px" width="12" height="12"><path d="M2 1.5L10 9.5M1.3 7L4.7 10.4" stroke="#7f7f7f" stroke-width="1"/></svg>
</div>
<style>
#right .lbl{position:absolute;left:13.8px;font-size:12px;color:#7a7a7a;line-height:14px}
#right .hd .t{transform:scaleX(.99)}
#right .hd{position:absolute;left:10.2px;font-size:12px;color:#33373d;line-height:14px;-webkit-text-stroke:0.25px #33373d}
#right .inp{position:absolute;left:15px;width:223px;height:22px;border:1px solid #ececec;border-radius:0;background:#fff}
#right .inp .v{position:absolute;left:7.2px;top:0;line-height:21px;font-size:12px;color:#686868}
#right .calc{position:absolute;left:204.9px;top:5px}
#right .dd{position:absolute;left:206.5px;top:7px}
</style>
<div id="right">
<div class="abs" style="left:-1px;top:0;width:1.5px;height:769px;background:#dedede"></div>
<div class="abs" style="left:10.4px;top:11px;font-size:12px;color:#666;line-height:14px"><span class="t" style="transform:scaleX(.912)">Lateral Snap Line-2</span></div>
<svg class="abs" style="left:115.5px;top:10.8px" width="13" height="13" viewBox="0 0 13 13" fill="#7c7c7c"><path d="M0.6 12.4L1.5 8.6L8.3 1.8L11.2 4.7L4.4 11.5Z"/><path d="M9.1 1L9.9 0.2Q10.4 -0.2 10.9 0.2L12.8 2.1Q13.2 2.6 12.8 3.1L12 3.9Z"/></svg>
<div class="abs" style="left:0;top:34px;width:253px;height:1px;background:#e8e8e8"></div>
<div class="hd" style="top:45px"><span class="t" style="transform:scaleX(.968)">Physical Attributes</span></div><svg class="abs" style="left:229.5px;top:47.599999999999994px" width="12" height="8" viewBox="0 0 12 8" fill="none" stroke="#5a5a5a" stroke-width="1.3"><path d="M0.8 6.6L6 1.2L11.2 6.6"/></svg>
<div class="inp" style="top:370.4px"><div class="v" style="color:#8c8c8c"><span class="t" style="transform:scaleX(.93)">Snap Both Sides</span></div><svg class="dd" width="11" height="7" viewBox="0 0 11 7" fill="none" stroke="#b5b5b5" stroke-width="1.1"><path d="M0.8 0.8L5.5 5.6L10.2 0.8"/></svg></div>
<div class="lbl" style="top:78.5px"><span class="t" style="transform:scaleX(.928)">Start Point<span style="color:#f03a3a">X</span></span></div><div class="inp" style="top:99.5px"><div class="v"><span class="t" style="transform:scaleX(1.04)">#W</span></div><svg class="calc" width="11" height="12" viewBox="0 0 11 12"><rect x="1.3" y="1.4" width="7.4" height="9.6" rx="0.4" fill="none" stroke="#505050" stroke-width="1.25"/><path d="M1.3 1.4V11" stroke="#8a8a8a" stroke-width="1.25"/><rect x="3" y="3.3" width="4" height="2.1" fill="#4c4c4c"/><path d="M3.1 7.4V9.6M6.9 7.4V9.6" stroke="#bdbdbd" stroke-width="1.1"/></svg></div>
<div class="lbl" style="top:131px"><span class="t" style="transform:scaleX(.928)">Start Point<span style="color:#3aa03a">Y</span></span></div><div class="inp" style="top:152.5px"><div class="v"><span class="t" style="transform:scaleX(1.04)">0</span></div><svg class="calc" width="11" height="12" viewBox="0 0 11 12"><rect x="1.3" y="1.4" width="7.4" height="9.6" rx="0.4" fill="none" stroke="#505050" stroke-width="1.25"/><path d="M1.3 1.4V11" stroke="#8a8a8a" stroke-width="1.25"/><rect x="3" y="3.3" width="4" height="2.1" fill="#4c4c4c"/><path d="M3.1 7.4V9.6M6.9 7.4V9.6" stroke="#bdbdbd" stroke-width="1.1"/></svg></div>
<div class="lbl" style="top:191px"><span class="t" style="transform:scaleX(.928)">End Point<span style="color:#f03a3a">X</span></span></div><div class="inp" style="top:212.39999999999998px"><div class="v"><span class="t" style="transform:scaleX(1.04)">#W</span></div><svg class="calc" width="11" height="12" viewBox="0 0 11 12"><rect x="1.3" y="1.4" width="7.4" height="9.6" rx="0.4" fill="none" stroke="#505050" stroke-width="1.25"/><path d="M1.3 1.4V11" stroke="#8a8a8a" stroke-width="1.25"/><rect x="3" y="3.3" width="4" height="2.1" fill="#4c4c4c"/><path d="M3.1 7.4V9.6M6.9 7.4V9.6" stroke="#bdbdbd" stroke-width="1.1"/></svg></div>
<div class="lbl" style="top:243.5px"><span class="t" style="transform:scaleX(.928)">End Point<span style="color:#3aa03a">Y</span></span></div><div class="inp" style="top:265px"><div class="v"><span class="t" style="transform:scaleX(1.04)">-#D1</span></div><svg class="calc" width="11" height="12" viewBox="0 0 11 12"><rect x="1.3" y="1.4" width="7.4" height="9.6" rx="0.4" fill="none" stroke="#505050" stroke-width="1.25"/><path d="M1.3 1.4V11" stroke="#8a8a8a" stroke-width="1.25"/><rect x="3" y="3.3" width="4" height="2.1" fill="#4c4c4c"/><path d="M3.1 7.4V9.6M6.9 7.4V9.6" stroke="#bdbdbd" stroke-width="1.1"/></svg></div>
<div class="hd" style="top:306.5px"><span class="t">Part Attributes</span></div><svg class="abs" style="left:229.5px;top:309px" width="12" height="8" viewBox="0 0 12 8" fill="none" stroke="#5a5a5a" stroke-width="1.3"><path d="M0.8 6.6L6 1.2L11.2 6.6"/></svg>
<div class="abs" style="left:15px;top:332.5px;font-size:12px;font-weight:bold;color:#111;line-height:14px"><span class="t">Basic Properties</span></div>
<div class="lbl" style="top:352.5px"><span class="t" style="transform:scaleX(.98)">Direction</span></div>
<div class="hd" style="top:409.5px;-webkit-text-stroke:0.35px #33373d"><span class="t">Design Attribute</span></div><svg class="abs" style="left:229.5px;top:412px" width="12" height="8" viewBox="0 0 12 8" fill="none" stroke="#5a5a5a" stroke-width="1.3"><path d="M0.8 6.6L6 1.2L11.2 6.6"/></svg>
<div class="lbl" style="top:437.5px"><span class="t" style="transform:scaleX(.955)">Hide Conditions</span></div>
<div class="inp" style="top:455.2px"><div class="v"><span class="t" style="transform:scaleX(1.1)">No</span></div><svg class="dd" width="11" height="7" viewBox="0 0 11 7" fill="none" stroke="#b5b5b5" stroke-width="1.1"><path d="M0.8 0.8L5.5 5.6L10.2 0.8"/></svg></div>
<div class="abs" style="left:2.7px;top:56.4px;width:249px;height:324px;border:4px solid #ff0b0b;border-radius:5px"></div>
</div>
<div id="bbar">
<div class="abs" style="left:566px;top:0;width:481px;height:38px;border-left:1px solid #e6e6e6"></div>
<div class="abs" style="left:577px;top:12px;font-size:14px;color:#666;line-height:16px"><span class="t" style="transform:scaleX(.93)">Explosion Offsets</span></div>
<div class="abs" style="left:702px;top:20.5px;width:143px;height:2px;background:#e9e9e9;border-radius:1px"></div>
<div class="abs" style="left:692px;top:19.5px;width:11px;height:11px;border-radius:6px;background:#1a73e8;box-shadow:0 0 0 2px rgba(26,115,232,.12)"></div>
<svg class="abs" style="left:850px;top:0" width="197" height="38" viewBox="1150 783 197 38">
<path d="M1156.5 783V821M1194.5 783V821M1232.5 783V821M1270.5 783V821M1308.5 783V821" stroke="#e6e6e6" stroke-width="1"/>
<g fill="none" stroke="#6a6a6a" stroke-width="1.4" stroke-linejoin="round">
<path d="M1169 799.4Q1169 797.3 1171 797.3Q1173 797.3 1173 799.2Q1173 800.6 1171.6 802.2L1169 806.7H1173.2"/>
<path d="M1176.2 797.4H1178.6Q1181.6 797.4 1181.6 800.4V803.6Q1181.6 806.6 1178.6 806.6H1176.2Z"/>
<path d="M1207 798.6Q1207.6 797.3 1209 797.3Q1211 797.3 1211 799.4Q1211 801.6 1208.8 801.7Q1211.2 801.8 1211.2 804.2Q1211.2 806.7 1209 806.7Q1207.4 806.7 1206.8 805.4"/>
<path d="M1214.2 797.4H1216.6Q1219.6 797.4 1219.6 800.4V803.6Q1219.6 806.6 1216.6 806.6H1214.2Z"/>
<path d="M1251.5 796.6L1256.6 799.4V805L1251.5 807.9L1246.4 805V799.4Z" stroke-width="1.3"/><path d="M1246.4 799.4L1251.5 802.2L1256.6 799.4M1251.5 802.2V807.9" stroke-width="1.3"/>
</g>
<path d="M1282.5 802.2Q1286 797.4 1289.7 797.4Q1293.4 797.4 1297 802.2Q1293.4 807 1289.7 807Q1286 807 1282.5 802.2Z" fill="#7a7a7a"/><circle cx="1289.7" cy="802.2" r="3" fill="#fff"/><circle cx="1289.7" cy="802.2" r="1.4" fill="#7a7a7a"/>
<circle cx="1327.8" cy="802.2" r="6" fill="#7a7a7a"/><path d="M1327.8 798.6V803.2" stroke="#fff" stroke-width="1.5"/><circle cx="1327.8" cy="805.4" r="0.9" fill="#fff"/>
</svg>
</div>
<!-- viewport side toggles -->
<div class="abs" style="left:283.4px;top:404.7px;width:33.2px;height:47.8px;border-radius:50%;background:rgba(255,255,255,.78);z-index:4"></div>
<svg class="abs" style="left:303.5px;top:422.3px;z-index:25" width="9" height="13" viewBox="0 0 9 13" fill="none" stroke="#4a4a4a" stroke-width="1.4"><path d="M7.4 1L1.6 6.3L7.4 11.6"/></svg>
<div class="abs" style="left:1332px;top:404.7px;width:15px;height:48.2px;border-radius:15px 0 0 15px / 22px 0 0 22px;background:#f8f8f8;z-index:21"></div>
<svg class="abs" style="left:1335.3px;top:422.3px;z-index:22" width="9" height="13" viewBox="0 0 9 13" fill="none" stroke="#5a5a5a" stroke-width="1.3"><path d="M1.4 1L7 6.3L1.4 11.6"/></svg>

</body></html>
